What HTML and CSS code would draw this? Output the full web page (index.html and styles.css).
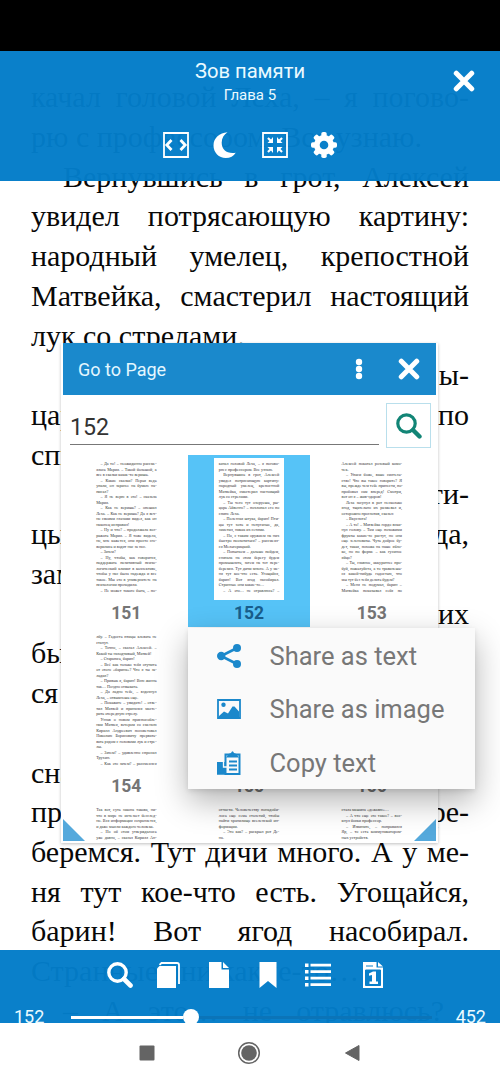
FILE: index.html
```html
<!DOCTYPE html>
<html lang="ru">
<head>
<meta charset="utf-8">
<title>Зов памяти</title>
<link rel="stylesheet" href="styles.css">
</head>
<body>
<div class="phone">
  <div class="status"></div>
  <main class="reader">
    <div class="book">
      <p>качал головой Леха, – я погово-</p>
      <p class="end">рю с профессором. Все узнаю.</p>
      <p class="in">Вернувшись в грот, Алексей</p>
      <p>увидел потрясающую картину:</p>
      <p>народный умелец, крепостной</p>
      <p>Матвейка, смастерил настоящий</p>
      <p class="end">лук со стрелами.</p>
      <p class="in">– Ты чего тут озоруешь, ры-</p>
      <p>царь Айвенго? – похлопал его по</p>
      <p class="end">спине Леха.</p>
      <p class="in">– Полезная штука, барин! Пти-</p>
      <p>цы тут хоть и непуганые, да,</p>
      <p class="end">заметил, никак их сетями.</p>
      <p class="in">– Но, с таким оружием на них</p>
      <p>быстро поохотиться? – рассмеял-</p>
      <p class="end">ся Мельгорицкий.</p>
      <p class="in">– Попытаем – дальше пойдем,</p>
      <p>сначала на этом берегу будем</p>
      <p>промышлять, затем на тот пере-</p>
      <p>беремся. Тут дичи много. А у ме-</p>
      <p>ня тут кое-что есть. Угощайся,</p>
      <p>барин! Вот ягод насобирал.</p>
      <p class="end">Странные они какие-то…</p>
      <p class="in last">– А это… не отравлюсь?</p>
    </div>

    <header class="topbar">
      <div class="title">Зов памяти</div>
      <div class="chapter">Глава 5</div>
      <div class="tools">
        <svg viewBox="0 0 26 26"><path d="M1 1h24v24H1z" fill="none" stroke="#fff" stroke-width="1.800"/><path d="M8.500 8 3.800 13l4.700 5M17.500 8l4.700 5-4.700 5" fill="none" stroke="#fff" stroke-width="2.800"/></svg>
        <svg viewBox="0 0 26 26"><path d="M15.500.2C7.500.6 1.500 6 1.500 13.500 1.500 20.500 7 26 13.700 26c4.500 0 8-2 10-5.300-8.500 1.500-14-3-14-10C9.700 6 12 2.500 15.500.2z" fill="#fff"/></svg>
        <svg viewBox="0 0 26 26"><path d="M1 1h24v24H1z" fill="none" stroke="#fff" stroke-width="1.800"/><path d="M11 5v6H5.500l2-2-2.300-2.300L6.700 5.200 9 7.500zM15 5v6h5.500l-2-2 2.300-2.300-1.500-1.500L17 7.500zM11 21v-6H5.500l2 2-2.300 2.300 1.500 1.500L9 18.500zM15 21v-6h5.500l-2 2 2.300 2.300-1.500 1.500-2.300-2.300z" fill="#fff"/></svg>
        <svg viewBox="-13 -13 26 26"><g fill="#fff"><g id="cog"><rect x="-2.700" y="-13" width="5.400" height="26" rx="1.800"/><rect x="-13" y="-2.700" width="26" height="5.400" rx="1.800"/></g><use href="#cog" transform="rotate(45)"/></g><circle r="7.200" fill="none" stroke="#fff" stroke-width="5.600"/><circle r="4.300" fill="#0a80ca"/></svg>
      </div>
      <svg class="close" viewBox="0 0 20 20"><path d="M3 3l14 14M17 3 3 17" stroke="#fff" stroke-width="4.600" stroke-linecap="round"/></svg>
    </header>

    <footer class="bottombar">
      <div class="actions">
        <svg viewBox="0 0 26 26"><circle cx="10.500" cy="10.500" r="8.700" fill="none" stroke="#fff" stroke-width="3.400"/><path d="M17 17l6.500 6.500" stroke="#fff" stroke-width="4.600" stroke-linecap="round"/></svg>
        <svg viewBox="0 0 26 26"><path d="M1 6.500 3.500 4H20v22H1z" fill="#fff"/><path d="M3.500 2.800 5.500 1H21q2 0 2 2v19" fill="none" stroke="#fff" stroke-width="1.800"/></svg>
        <svg viewBox="0 0 26 26"><path d="M3 0h12.500v7.500H23V26H3zM17 0l6 6h-6z" fill="#fff"/></svg>
        <svg viewBox="0 0 26 26"><path d="M4.500 0h17v26L13 19l-8.500 7z" fill="#fff"/></svg>
        <svg viewBox="0 0 26 26"><path d="M0 1.500h3.500V5H0zM5.500 1.800H26v2.800H5.500zM0 8h3.500v3.500H0zM5.500 8.300H26v2.800H5.500zM0 14.500h3.500V18H0zM5.500 14.800H26v2.800H5.500zM0 21h3.500v3.500H0zM5.500 21.300H26v2.800H5.500z" fill="#fff"/></svg>
        <svg class="goto" viewBox="0 0 26 26"><path d="M3 0h13.500v5.500H23V26H3zM18 0l5 4.500h-5z" fill="#fff"/><path d="M6 4h7M5.500 8h15v15.500h-15z" fill="#0a80ca" stroke="#0a80ca" stroke-width="1"/><path d="M9 11.500 13 9.500h3v10h2v2.500H9.500v-2.500H12v-6.500l-3 .8z" fill="#fff"/></svg>
      </div>
      <div class="seek">
        <span>152</span>
        <div class="track"><i class="fill"></i><i class="knob"></i><i class="rest"></i></div>
        <span>452</span>
      </div>
    </footer>

    <section class="dialog">
      <div class="dialog-head">
        <h1>Go to Page</h1>
        <svg class="dots" viewBox="0 0 8 22"><g fill="#fff"><circle cx="4" cy="4" r="3.200"/><circle cx="4" cy="11" r="3.200"/><circle cx="4" cy="18" r="3.200"/></g></svg>
        <svg class="x" viewBox="0 0 20 20"><path d="M3 3l14 14M17 3 3 17" stroke="#fff" stroke-width="4.600" stroke-linecap="round"/></svg>
      </div>
      <div class="search-row">
        <div class="field">152</div>
        <div class="find"><svg viewBox="0 0 26 26"><circle cx="10.500" cy="10.500" r="8.700" fill="none" stroke="#128576" stroke-width="3.200"/><path d="M17 17l6.500 6.500" stroke="#128576" stroke-width="4.400" stroke-linecap="round"/></svg></div>
      </div>
      <div class="pages">
        <div class="cell"><div class="sheet">
          <p class="in">– Да то! – неожиданно рассме-</p><p>ялась Мария. – Такой большой, а</p><p class="end">все в сказки какие-то веришь.</p>
          <p class="in">– Какие сказки? Перья ведь</p><p>упали, он заранее на бумаге на-</p><p class="end">писал?</p>
          <p class="in">– Я не верю в это! – сказала</p><p class="end">Мария.</p>
          <p class="in">– Как не веришь? – опешил</p><p>Леха. – Как не веришь? Да я веч-</p><p>но своими глазами видел, как он</p><p class="end">наконец исправил!</p>
          <p class="in">– Ну и что? – продолжала воз-</p><p>ражать Мария. – Я тоже видела,</p><p>но, мне кажется, они просто сго-</p><p class="end">ворились и водят нас за нос.</p>
          <p class="in end">– Зачем?</p>
          <p class="in">– Ну, чтобы, как говорится,</p><p>поддержать позитивный психо-</p><p>логический климат в коллективе,</p><p>чтобы у нас была надежда и все</p><p>такое. Мы это в университете на</p><p class="end">психологии проходили.</p>
          <p class="in">– Не может такого быть, – по-</p>
        </div><b>151</b></div>
        <div class="cell on"><div class="sheet">
          <p>качал головой Леха, – я погово-</p><p class="end">рю с профессором. Все узнаю.</p>
          <p class="in">Вернувшись в грот, Алексей</p><p>увидел потрясающую картину:</p><p>народный умелец, крепостной</p><p>Матвейка, смастерил настоящий</p><p class="end">лук со стрелами.</p>
          <p class="in">– Ты чего тут озоруешь, ры-</p><p>царь Айвенго? – похлопал его по</p><p class="end">спине Леха.</p>
          <p class="in">– Полезная штука, барин! Пти-</p><p>цы тут хоть и непуганые, да,</p><p class="end">заметил, никак их сетями.</p>
          <p class="in">– Но, с таким оружием на них</p><p>быстро поохотиться? – рассмеял-</p><p class="end">ся Мельгорицкий.</p>
          <p class="in">– Попытаем – дальше пойдем,</p><p>сначала на этом берегу будем</p><p>промышлять, затем на тот пере-</p><p>беремся. Тут дичи много. А у ме-</p><p>ня тут кое-что есть. Угощайся,</p><p>барин! Вот ягод насобирал.</p><p class="end">Странные они какие-то…</p>
          <p class="in">– А это… не отравлюсь? –</p>
        </div><b>152</b></div>
        <div class="cell"><div class="sheet">
          <p>Алексей покатал розовый комо-</p><p class="end">чек.</p>
          <p class="in">– Упаси боже, ваше сиятель-</p><p>ство! Что вы такое говорите? Я</p><p>вы, прежде чем тебе принести, по-</p><p>пробовал сам вперед! Смотри,</p><p class="end">вот он я – жив-здоров!</p>
          <p class="in">Леха засунул в рот несколько</p><p>ягод, тщательно их разжевал и,</p><p class="end">осторожно проглотив, сказал:</p>
          <p class="in end">– Вкуснота!</p>
          <p class="in">– А то! – Матвейка гордо вски-</p><p>нул голову. – Там еще похожими</p><p>фрукты какие-то растут, но они</p><p>еще зеленоваты. Чуть доброе бу-</p><p>дет, такая, похожа на наше ябло-</p><p>ко, но по форме – как гусиное</p><p class="end">яйцо?</p>
          <p class="in">– Ты, главное, аккуратнее про-</p><p>буй, пожалуйста, а то траванешь-</p><p>ся какой-нибудь гадостью, что</p><p class="end">мы тут без тебя делать будем?</p>
          <p class="in">– Меня не подумал, барин –</p><p>Матвейка показывал себя по</p>
        </div><b>153</b></div>
        <div class="cell"><div class="sheet">
          <p>лбу. – Гадость птицы клевать не</p><p class="end">станут.</p>
          <p class="in">– Точно, – сказал Алексей. –</p><p class="end">Какой ты находчивый, Матвей!</p>
          <p class="in end">– Стараюсь, барин!</p>
          <p class="in">– Всё как только тебя отучить</p><p>от этого «барина»? Что я ты за-</p><p class="end">ладил?</p>
          <p class="in">– Привык я, барин! Всю жизнь</p><p class="end">так… Поздно отвыкать.</p>
          <p class="in">– Да ладно тебе, – вздохнул</p><p class="end">Леха, – отвыкнешь еще.</p>
          <p class="in">– Покажите – увидите! – отве-</p><p>тил Матвей и принялся масте-</p><p class="end">рить очередную стрелу.</p>
          <p class="in">Узнав о новом приспособле-</p><p>нии Матвея, вечером со сменою</p><p>Кирилл Андреевич посоветовал</p><p>Николаю Борисовичу прервать-</p><p>вать рядом с головами лук и стре-</p><p class="end">лы.</p>
          <p class="in">– Зачем? – удивленно спросил</p><p class="end">Трухин.</p>
          <p class="in">– Как это зачем? – рассмеялся</p>
        </div><b>154</b></div>
        <div class="cell"><div class="sheet"></div><b>155</b></div>
        <div class="cell"><div class="sheet"></div><b>156</b></div>
        <div class="cell"><div class="sheet">
          <p>Так вот, суть закона такова, ни-</p><p>что в мире не исчезает бесслед-</p><p>но. Вся информация сохраняется,</p><p class="end">и даже мысли каждого человека.</p><p class="in">– Но об этом утверждалось</p><p>уже давно, – сказал Кирилл Ан-</p>
        </div></div>
        <div class="cell"><div class="sheet">
          <p>отчасти. Человечеству понадоби-</p><p>лось еще семь столетий, чтобы</p><p>найти хранилище вселенской ин-</p><p class="end">формации.</p><p class="in">– Это как? – раскрыл рот Де-</p><p class="end">на.</p>
        </div></div>
        <div class="cell"><div class="sheet">
          <p class="end">стала машина «дежавю»…</p><p class="in">– А что еще это такое? – вос-</p><p class="end">кнул бояки профессор.</p><p class="in">– Извините, – поправился</p><p>Яр, – то есть коммуникатором-</p><p class="end">ных устройств.</p>
        </div></div>
      </div>
      <i class="grip left"></i><i class="grip right"></i>
    </section>

    <div class="menu">
      <div class="item"><svg viewBox="0 0 24 24"><path d="M20 4 4 12l16 8" fill="none" stroke="#1b88cb" stroke-width="2.600"/><g fill="#1b88cb"><circle cx="20" cy="4" r="4"/><circle cx="4.200" cy="12" r="4.200"/><circle cx="20" cy="20" r="4"/></g></svg><span>Share as text</span></div>
      <div class="item"><svg viewBox="0 0 24 24"><path d="M1 3h22v18H1z" fill="none" stroke="#1b88cb" stroke-width="1.800"/><circle cx="6.500" cy="7.800" r="2.200" fill="#1b88cb"/><path d="M2 20.500V19l5-4.500 4 2 4.500-7h2l4.500 5v6z" fill="#1b88cb"/></svg><span>Share as image</span></div>
      <div class="item"><svg viewBox="0 0 24 24"><path d="M0 11h9v12.500H0z" fill="#1b88cb"/><path d="M8.500 3.500h14v19.500h-14z" fill="#fafafa" stroke="#1b88cb" stroke-width="2"/><path d="M9 6.500 11.500 3l2.500-1q1.500-3.500 3 0l2.500 1L22 6.500z" fill="#1b88cb"/><path d="M12 10.500h8M12 14.500h8M12 18.500h8" stroke="#1b88cb" stroke-width="1.900"/><path d="M0 11h9v12.500H0z" fill="#1b88cb"/><path d="M6.500 11v5h5" fill="none" stroke="#fafafa" stroke-width="1.300"/></svg><span>Copy text</span></div>
    </div>
  </main>
  <nav class="nav">
    <svg viewBox="0 0 24 24"><rect x="4.500" y="4.500" width="15" height="15" rx="1" fill="#646464"/></svg>
    <svg viewBox="0 0 24 24"><circle cx="12" cy="12" r="10.300" fill="none" stroke="#646464" stroke-width="1.500"/><circle cx="12" cy="12" r="7.800" fill="#646464"/></svg>
    <svg viewBox="0 0 24 24"><path d="M5.500 12 19 4.500v15z" fill="#646464" stroke="#646464" stroke-linejoin="round"/></svg>
  </nav>
</div>
</body>
</html>
```
FILE: styles.css
```css
* { box-sizing: border-box; }
body { margin: 0; background: #fff; font-family: Roboto, sans-serif; }
p, h1 { margin: 0; }
svg { display: block; flex: none; }
.phone { width: 500px; height: 1083px; display: flex; flex-direction: column; overflow: hidden; }
.status { height: 51px; background: #000; flex: none; }
.reader { position: relative; height: 972px; flex: none; overflow: hidden; background: #fff; }

.book { padding: 26.3px 31px 0; font: 30px/39.73px "Liberation Serif", serif; color: #080808; }
.book p { height: 39.73px; white-space: nowrap; text-align-last: justify; }
.book .in { padding-left: 32px; }
.book .end { text-align-last: left; }
.book .last { padding-right: 25px; }

.topbar { position: absolute; inset: 0 0 auto; height: 130px; padding-top: 8px; background: rgba(3, 124, 200, .971); color: #eafaff; text-align: center; }
.title { font-size: 20.2px; line-height: 25px; }
.chapter { font-size: 15px; line-height: 22px; }
.tools { display: flex; justify-content: center; gap: 23.5px; margin-top: 26px; }
.tools svg, .actions svg { width: 26px; height: 26px; }
.close { position: absolute; left: 453px; top: 19px; width: 22px; height: 22px; }

.bottombar { position: absolute; inset: auto 0 0; height: 73px; padding-top: 12px; background: rgba(3, 124, 200, .971); color: #eafaff; overflow: hidden; }
.actions { display: flex; gap: 23.4px; padding-left: 107px; }
.actions .goto { margin-left: 6px; }
.seek { display: flex; align-items: center; padding: 0 14px; margin-top: 18px; height: 22px; font-size: 18px; }
.seek span { width: 57px; line-height: 22px; }
.seek span:last-child { width: auto; margin-left: 24px; }
.track { display: flex; align-items: center; width: 361px; height: 16px; }
.fill { width: 112px; height: 3px; background: #fff; }
.knob { width: 16px; height: 16px; border-radius: 50%; background: #fff; flex: none; }
.rest { flex: 1; height: 3px; background: #0b74b8; }

.dialog { position: absolute; left: 61px; top: 292px; width: 377px; height: 500px; overflow: hidden; background: #fff; border: solid #fff; border-width: 0 2px 2px; box-shadow: 0 1px 3px rgba(0, 0, 0, .25); }
.dialog-head { display: flex; align-items: center; height: 52px; padding: 0 16.5px 0 15px; background: #1a89cc; color: #e4f7ff; }
.dialog-head h1 { flex: 1; font-size: 18px; font-weight: 400; }
.dots { width: 8px; height: 22px; margin-right: 34.500px; }
.x { width: 22px; height: 22px; }
.search-row { display: flex; justify-content: space-between; padding: 8px 5px 0 7px; }
.field { width: 309px; height: 42px; border-bottom: 1px solid #777; font-size: 23.2px; line-height: 48px; color: #333; }
.find { width: 45px; height: 45px; border: 1px solid #b9dfec; display: grid; place-items: center; }
.find svg { width: 26px; height: 26px; }
.pages { display: grid; grid-template-columns: repeat(3, 122.7px); grid-auto-rows: 173px; padding: 7px 0 0 2px; }
.cell { display: flex; flex-direction: column; align-items: center; padding-top: 2.500px; }
.cell.on { background: #56c3f7; height: 172px; }
.sheet { width: 70px; height: 142px; flex: none; padding: 3.800px 4.800px 0; background: #fff; font: 4.150px/5.500px "Liberation Serif", serif; color: #333; }
.sheet p { height: 5.500px; white-space: nowrap; text-align-last: justify; }
.sheet .in { padding-left: 4.400px; }
.sheet .end { text-align-last: left; }
.cell b { font-size: 17.500px; line-height: 27px; color: #757575; }
.cell.on b { color: #195e8c; }
.grip { position: absolute; bottom: 0; width: 22px; height: 22px; background: #55a9dc; }
.grip.left { left: 0; clip-path: polygon(0 0, 0 100%, 100% 100%); }
.grip.right { right: 0; clip-path: polygon(100% 0, 0 100%, 100% 100%); }

.menu { position: absolute; left: 188px; top: 577px; width: 287px; height: 161px; padding-top: 1px; background: #fafafa; box-shadow: 0 12px 30px rgba(0, 0, 0, .3), 0 2px 5px rgba(0, 0, 0, .1); }
.item { display: flex; align-items: center; height: 53.600px; padding-left: 29px; gap: 28.500px; font-size: 25.500px; color: #777; }
.item svg { width: 24px; height: 24px; }
.item span { white-space: nowrap; }

.nav { height: 60px; flex: none; background: #fff; display: flex; justify-content: center; align-items: center; gap: 78.500px; padding-right: 1.500px; }
.nav svg { width: 24px; height: 24px; }
```
